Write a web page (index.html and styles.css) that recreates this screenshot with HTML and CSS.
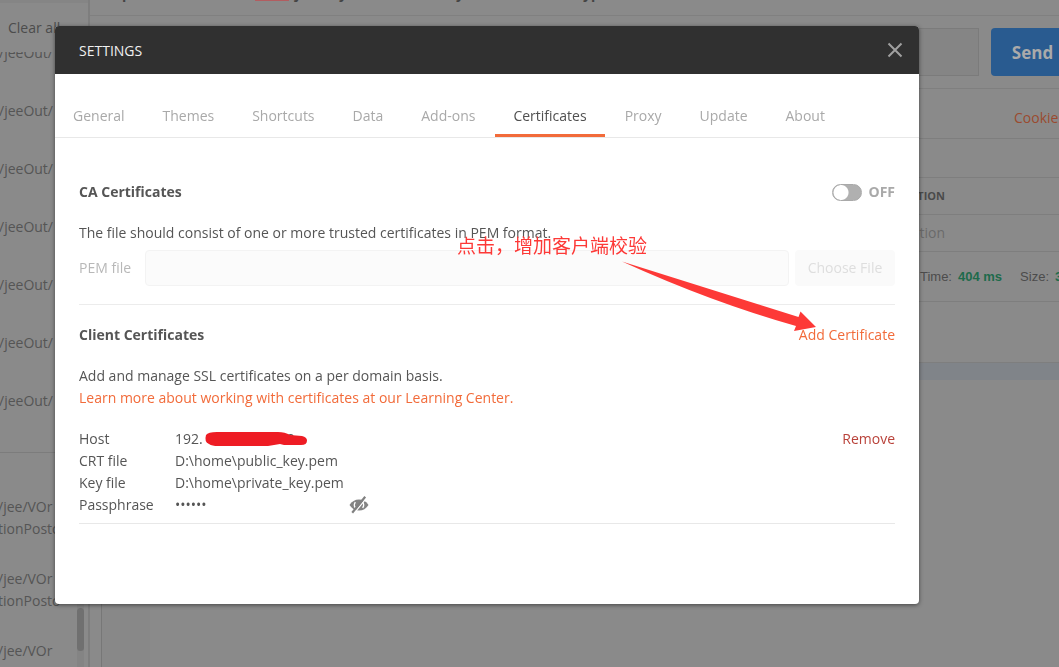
FILE: index.html
```html
<!DOCTYPE html>
<html lang="en">
<head>
<meta charset="utf-8">
<title>Settings</title>
<link rel="stylesheet" href="styles.css">
</head>
<body>
<div class="app">
  <aside class="sidebar">
    <div class="sidebar-head"><button class="clear" type="button">Clear all</button></div>
    <div class="history">
      <ul class="group">
        <li>/jeeOut/</li><li>/jeeOut/</li><li>/jeeOut/</li><li>/jeeOut/</li><li>/jeeOut/</li><li>/jeeOut/</li><li>/jeeOut/</li>
      </ul>
      <ul class="group tall">
        <li>/jee/VOr<br>tionPosto</li><li>/jee/VOr<br>tionPosto</li><li>/jee/VOr<br>tionPosto</li>
      </ul>
      <div class="scroll"><div class="thumb"></div></div>
    </div>
  </aside>
  <main class="main">
    <div class="title-bar"><span>p</span><i class="mark"></i><span>j</span><span>y</span><span>y</span><span>yp</span></div>
    <div class="request"><div class="url"></div><button class="send" type="button">Send</button></div>
    <div class="row links"><a href="#">Cookies</a></div>
    <div class="row spacer"></div>
    <div class="row cell head">DESCRIPTION</div>
    <div class="row cell">Description</div>
    <div class="row status"><span>Time:</span><b>404 ms</b><span class="size">Size:</span><b>341 B</b></div>
    <div class="row blank"></div>
    <div class="band"></div>
    <div class="editor"><div class="gutter"></div></div>
  </main>
</div>

<div class="overlay">
  <section class="modal" role="dialog" aria-labelledby="modal-title">
    <header class="modal-head">
      <h1 id="modal-title">SETTINGS</h1>
      <button class="close" type="button" aria-label="Close">
        <svg width="16" height="16" viewBox="0 0 16 16"><path d="M1.5 1.5l13 13M14.5 1.5l-13 13" fill="none" stroke="#a0a0a0" stroke-width="2"/></svg>
      </button>
    </header>
    <nav class="tabs">
      <button type="button">General</button><button type="button">Themes</button><button type="button">Shortcuts</button><button type="button">Data</button><button type="button">Add-ons</button><button type="button" class="active">Certificates</button><button type="button">Proxy</button><button type="button">Update</button><button type="button">About</button>
    </nav>
    <div class="content">
      <div class="line">
        <h2>CA Certificates</h2>
        <label class="toggle"><input type="checkbox">OFF</label>
      </div>
      <p class="info">The file should consist of one or more trusted certificates in PEM format.</p>
      <div class="pem">
        <label for="pem">PEM file</label>
        <input id="pem" type="text" disabled>
        <button type="button" disabled>Choose File</button>
      </div>
      <div class="line client">
        <h2>Client Certificates</h2>
        <a href="#">Add Certificate</a>
      </div>
      <p class="info">Add and manage SSL certificates on a per domain basis.</p>
      <p class="learn"><a href="#">Learn more about working with certificates at our Learning Center.</a></p>
      <div class="cert">
        <dl>
          <dt>Host</dt>
          <dd>192.<span class="redacted">2<svg width="104" height="16" viewBox="0 0 104 16"><path d="M2 4Q4 1 13 1L74 1Q81 1 86 4L98 5Q103 6 103 9.500Q103 14 97 14L80 14L76 13L64 15L14 15Q8 15 5 13Q0 11 2 4Z" fill="#ee1c24"/></svg></span></dd>
          <dt>CRT file</dt><dd>D:\home\public_key.pem</dd>
          <dt>Key file</dt><dd>D:\home\private_key.pem</dd>
          <dt>Passphrase</dt>
          <dd class="pass"><span>••••••</span>
            <button type="button" class="eye" aria-label="Show passphrase"><svg width="20" height="18" viewBox="0 0 20 18"><path d="M0.500 9Q4 3.500 10 3.500T19.500 9Q16 14.500 10 14.500T0.500 9Z" fill="#848484"/><path d="M6.300 6Q4.300 9 6.300 12M13.700 6Q15.700 9 13.700 12" fill="none" stroke="#fff" stroke-width="1.300"/><path d="M17.600 1.800L4.800 17.600" stroke="#fff" stroke-width="1.300"/><path d="M16.200 0.800L3.200 16.800" stroke="#808080" stroke-width="2.200"/></svg></button>
          </dd>
        </dl>
        <button type="button" class="remove">Remove</button>
      </div>
    </div>
    <div class="note" lang="zh">点击，增加客户端校验</div>
    <svg class="arrow" width="196" height="74" viewBox="0 0 196 74"><path d="M1 1.500L177.500 57L179.500 51.500L195 67L173 71L175 66Q90 42 1 1.500Z" fill="#fd3937"/></svg>
  </section>
</div>
</body>
</html>
```
FILE: styles.css
```css
* { box-sizing: border-box; }
body {
  margin: 0;
  font: 14px/22px "Open Sans", "Noto Sans", sans-serif;
  color: #555;
  background: #8a8a8a;
}
button { padding: 0; border: 0; background: none; font: inherit; color: inherit; }
a { color: #f26b3a; text-decoration: none; }
h1, h2, p, ul, dl, dd { margin: 0; padding: 0; }
h2 { font-size: 14px; line-height: 22px; font-weight: 700; }

.app { display: flex; height: 100vh; overflow: hidden; background: #8a8a8a; }
.sidebar {
  flex: none;
  width: 90px;
  display: flex;
  flex-direction: column;
  color: #555;
  border-right: 2px solid #7e7e7e;
}
.sidebar-head { flex: none; height: 52px; padding: 14px 0 0 8px; border-top: 3px solid #858585; white-space: nowrap; }
.sidebar-head .clear { color: #4c4c4c; }
.history { position: relative; flex: 1; overflow: hidden; }
.group { list-style: none; margin-top: -27px; height: 428px; border-bottom: 1px solid #7c7c7c; overflow: hidden; }
.group li { height: 58px; padding-top: 17px; margin-left: -1px; white-space: nowrap; }
.group.tall { margin: 0; height: auto; padding-top: 26px; border: 0; }
.group.tall li { height: 72px; margin-left: -2px; }
.scroll { position: absolute; right: 4px; top: 0; bottom: 0; width: 7px; background: #848484; }
.thumb { margin-top: 556px; height: 43px; border-radius: 4px; background: #707070; }

.main { flex: 1; min-width: 0; display: flex; flex-direction: column; }
.title-bar {
  flex: none;
  display: grid;
  grid-template-columns: 133px 40px 44px 117px 127px 1fr;
  height: 16px;
  padding-left: 32px;
  border-bottom: 1px solid #808080;
  font-weight: 700;
  line-height: 0;
  overflow: hidden;
  color: #444;
}
.title-bar span { margin-top: -6px; }
.mark { width: 34px; height: 1px; background: #b25d60; }
.request { flex: none; display: flex; gap: 12px; height: 73px; padding-top: 12px; border-bottom: 1px solid #7f7f7f; }
.url { flex: 1; height: 48px; border: 1px solid #7b7b7b; background: #858585; }
.send { width: 68px; height: 48px; padding: 2px 0 0 15px; border-radius: 4px 0 0 4px; background: #295b90; color: #aaa; font-size: 17px; font-weight: 700; }
.row { flex: none; height: 37px; line-height: 36px; border-bottom: 1px solid #7e7e7e; overflow: hidden; white-space: nowrap; }
.links { height: 50px; line-height: 58px; display: flex; justify-content: flex-end; }
.links a { width: 45px; color: #9b4a2f; }
.spacer { height: 39px; }
.cell { padding-right: 114px; text-align: right; color: #6a6a6a; }
.cell.head { font-size: 11px; font-weight: 700; color: #4a4a4a; }
.status { display: flex; justify-content: flex-end; gap: 6px; height: 50px; line-height: 49px; font-family: "Liberation Sans", sans-serif; font-size: 13px; color: #4c4c4c; }
.status b { color: #1e6b4c; }
.status b:last-child { width: 4px; overflow: hidden; }
.status .size { margin-left: 12px; }
.blank { height: 61px; }
.band { flex: none; height: 17px; background: #808489; }
.editor { flex: 1; margin-left: 11px; border-left: 1px solid #777; }
.gutter { width: 48px; height: 100%; background: #888; }

.overlay { position: fixed; inset: 0; display: flex; align-items: flex-start; padding: 26px 140px 24px 55px; }
.modal { position: relative; flex: 1; min-width: 0; padding-bottom: 80px; border-radius: 4px; background: #fff; box-shadow: 0 1px 4px rgba(0, 0, 0, .5); }
.modal-head { display: flex; align-items: center; justify-content: space-between; height: 48px; padding: 0 16px 0 24px; border-radius: 4px 4px 0 0; background: #303030; }
.modal-head h1 { padding-top: 2px; font-size: 14px; font-weight: 500; color: #f0f0f0; }
.close { display: flex; }
.tabs { display: flex; gap: 2px; height: 64px; padding-top: 20px; border-bottom: 1px solid #e8e8e8; }
.tabs button { height: 43px; padding: 3px 18px 0; border-bottom: 3px solid transparent; color: #a9a9a9; }
.tabs .active { border-color: #f26b3a; color: #505050; }
.content { padding: 43px 24px 0; }
.line { display: flex; justify-content: space-between; align-items: center; }
.toggle { display: flex; align-items: center; gap: 6px; font-weight: 700; color: #a9a9a9; }
.toggle input { appearance: none; width: 30px; height: 17px; margin: 0; border: 1px solid #a9a9a9; border-radius: 9px; background: radial-gradient(circle at 8px 50%, #fff 7px, #b0b0b0 8px); }
.info { margin-top: 19px; }
.pem { display: flex; align-items: center; margin-top: 6px; padding-bottom: 18px; border-bottom: 1px solid #ececec; }
.pem label { width: 66px; color: #b8b8b8; }
.pem input { flex: 1; min-width: 0; height: 36px; border: 1px solid #f3f3f3; border-radius: 4px; background: #fbfbfb; }
.pem button { width: 100px; height: 36px; margin-left: 6px; border-radius: 4px; background: #fafafa; color: #dedede; }
.client { margin-top: 19px; }
.cert { display: flex; justify-content: space-between; align-items: flex-start; margin-top: 19px; padding-bottom: 7px; border-bottom: 1px solid #e8e8e8; }
.cert dl { display: grid; grid-template-columns: 96px 194px; }
.pass { display: flex; justify-content: space-between; align-items: center; }
.eye { display: flex; }
.remove { color: #b9423a; }
.redacted { position: relative; display: inline-block; width: 102px; padding-left: 84px; }
.redacted svg { position: absolute; left: 1px; top: 3px; }
.note { position: absolute; left: 402px; top: 205px; font: 19px/28px "Noto Sans CJK SC", sans-serif; color: #fd3937; white-space: nowrap; }
.arrow { position: absolute; left: 566px; top: 234px; }
```
